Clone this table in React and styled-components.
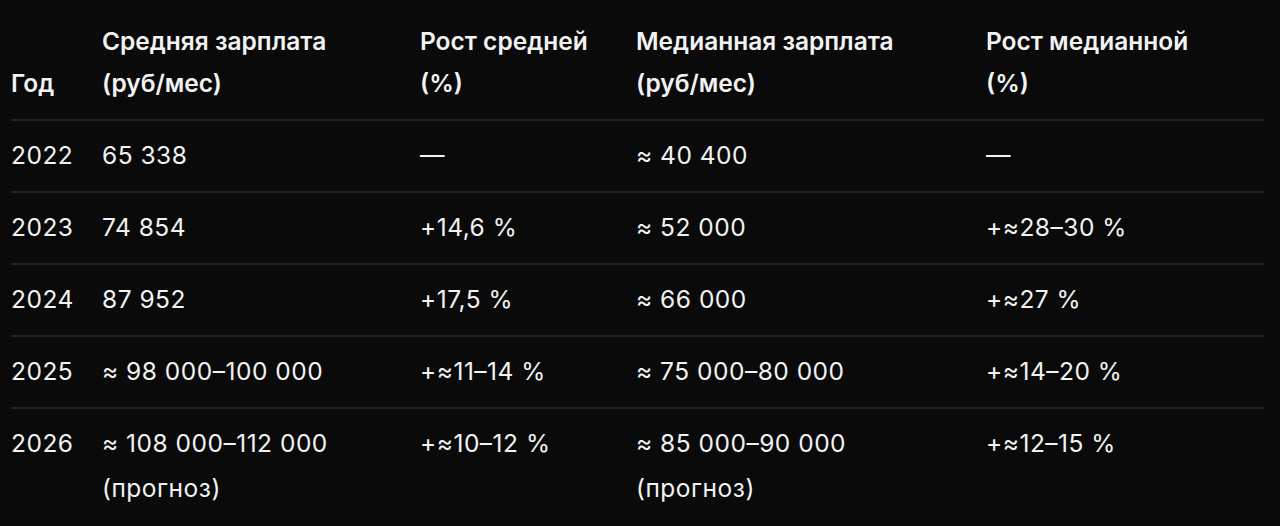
import styled, { createGlobalStyle } from "styled-components";

const GlobalStyle = createGlobalStyle`
  html, body {
    margin: 0;
    padding: 0;
    background: #0a0a0a;
  }
  body {
    font-family: Inter, "Liberation Sans", sans-serif;
    color: #f2f2f2;
  }
`;

const Page = styled.div`
  width: 1280px;
  height: 526px;
  box-sizing: border-box;
  padding: 6px 15px 0 11px;
  background: #0a0a0a;
  overflow: hidden;
`;

const Table = styled.table`
  width: 1254px;
  border-collapse: collapse;
  table-layout: fixed;
  font-size: 24.5px;
`;

const HeadCell = styled.th`
  text-align: left;
  vertical-align: bottom;
  font-weight: 600;
  line-height: 42px;
  padding: 14px 0 15px;
  border-bottom: 2px solid #222222;
`;

const Row = styled.tr`
  border-bottom: ${({ $last }) => ($last ? "none" : "2px solid #222222")};
`;

const Cell = styled.td`
  vertical-align: top;
  font-weight: 400;
  letter-spacing: 0.5px;
  line-height: 45px;
  padding: 12px 0 13px;
`;

const columns = [
  { width: 91, title: ["Год"] },
  { width: 318, title: ["Средняя зарплата", "(руб/мес)"] },
  { width: 216, title: ["Рост средней", "(%)"] },
  { width: 350, title: ["Медианная зарплата", "(руб/мес)"] },
  { width: 279, title: ["Рост медианной", "(%)"] },
];

const rows = [
  ["2022", ["65 338"], "—", ["≈ 40 400"], "—"],
  ["2023", ["74 854"], "+14,6 %", ["≈ 52 000"], "+≈28–30 %"],
  ["2024", ["87 952"], "+17,5 %", ["≈ 66 000"], "+≈27 %"],
  ["2025", ["≈ 98 000–100 000"], "+≈11–14 %", ["≈ 75 000–80 000"], "+≈14–20 %"],
  [
    "2026",
    ["≈ 108 000–112 000", "(прогноз)"],
    "+≈10–12 %",
    ["≈ 85 000–90 000", "(прогноз)"],
    "+≈12–15 %",
  ],
];

function Lines({ items }) {
  return items.map((text, i) => (
    <span key={i}>
      {i > 0 && <br />}
      {text}
    </span>
  ));
}

export default function App() {
  return (
    <>
      <GlobalStyle />
      <Page>
        <Table>
          <colgroup>
            {columns.map((c, i) => (
              <col key={i} style={{ width: c.width }} />
            ))}
          </colgroup>
          <thead>
            <tr>
              {columns.map((c, i) => (
                <HeadCell key={i}>
                  <Lines items={c.title} />
                </HeadCell>
              ))}
            </tr>
          </thead>
          <tbody>
            {rows.map((r, i) => (
              <Row key={r[0]} $last={i === rows.length - 1}>
                <Cell>{r[0]}</Cell>
                <Cell>
                  <Lines items={r[1]} />
                </Cell>
                <Cell>{r[2]}</Cell>
                <Cell>
                  <Lines items={r[3]} />
                </Cell>
                <Cell>{r[4]}</Cell>
              </Row>
            ))}
          </tbody>
        </Table>
      </Page>
    </>
  );
}
